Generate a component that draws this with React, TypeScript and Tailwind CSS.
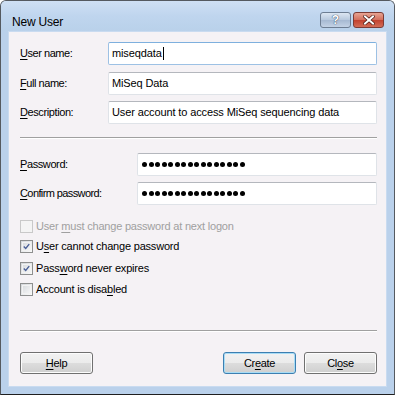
import React from "react"

const font = { fontFamily: '"Liberation Sans", Arial, sans-serif' }

function Key({ children }: { children: React.ReactNode }) {
  return <span className="underline underline-offset-[2px]">{children}</span>
}

function TextBox({ value, focused, width }: { value: string; focused?: boolean; width: string }) {
  return (
    <div
      className={`h-[23px] ${width} rounded-[2px] border bg-white flex items-center pl-[3px] ${
        focused ? "border-[#9dc1e4] border-t-[#7eb0de]" : "border-[#dfe3e8] border-t-[#b4b7bd]"
      }`}
    >
      <span className="text-[11px] tracking-[-0.12px] text-black">{value}</span>
      {focused && <span className="ml-[1px] w-px h-[13px] bg-black" />}
    </div>
  )
}

function Dots() {
  return (
    <div className="h-[23px] w-[240px] rounded-[2px] border border-[#dfe3e8] border-t-[#b4b7bd] bg-white flex items-center pl-[4px] gap-[1.5px]">
      {Array.from({ length: 16 }).map((_, i) => (
        <span key={i} className="w-[5px] h-[5px] rounded-full bg-black" />
      ))}
    </div>
  )
}

function Check({ checked, disabled, children }: { checked?: boolean; disabled?: boolean; children: React.ReactNode }) {
  return (
    <div className="flex items-center h-[13px]">
      <div
        className={`w-[13px] h-[13px] border flex items-center justify-center ${
          disabled ? "border-[#c9c9c9] bg-[#f4f4f4]" : "border-[#8e8f8f] bg-gradient-to-br from-[#d3d6da] to-[#fbfbfb]"
        }`}
      >
        <div className={`w-[9px] h-[9px] border ${disabled ? "border-[#f4f4f4]" : "border-[#f2f2f2]"} flex items-center justify-center`}>
          {checked && (
            <svg width="9" height="9" viewBox="0 0 9 9">
              <path d="M1 4.5 L3.5 7 L8 1.5" fill="none" stroke="#4a5f97" strokeWidth="1.8" />
            </svg>
          )}
        </div>
      </div>
      <span className={`ml-[3px] text-[11px] tracking-[-0.2px] ${disabled ? "text-[#a0a0a0]" : "text-black"}`}>{children}</span>
    </div>
  )
}

function Button({ children, primary }: { children: React.ReactNode; primary?: boolean }) {
  return (
    <div
      className={`w-[73px] h-[22px] rounded-[3px] border ${
        primary ? "border-[#3c7fb1] shadow-[inset_0_0_0_1px_#a8dcf5]" : "border-[#707070] shadow-[inset_0_0_0_1px_#fcfcfc]"
      } bg-[linear-gradient(#f2f2f2_0%,#ebebeb_50%,#dddddd_50%,#cfcfcf_100%)] flex items-center justify-center text-[11px] tracking-[-0.3px] text-black`}
    >
      {children}
    </div>
  )
}

function Separator() {
  return <div className="h-[2px] border-t border-[#a0a0a0] border-b border-b-white" />
}

export default function App() {
  return (
    <div style={font} className="w-[395px] h-[395px] bg-white">
      <div className="w-[395px] h-[395px] rounded-t-[6px] border border-[#555a60] border-b-[#1f1f1f] bg-[#bad1eb] flex flex-col overflow-hidden">
        {/* Title bar */}
        <div className="h-[30px] shrink-0 flex items-start justify-between bg-gradient-to-b from-[#cfe0f4] via-[#bfd5ee] to-[#b9d1ea] pl-[11px] pr-[10px]">
          <span className="mt-[12px] text-[12px] tracking-[-0.2px] text-black">New User</span>
          <div className="mt-[11px] flex gap-[2px]">
            <div className="w-[31px] h-[16px] rounded-[3px] border border-[#6d7d92] bg-[linear-gradient(#dce6f2_0%,#b7c8dd_50%,#a5b8d1_50%,#c3d2e5_100%)] flex items-center justify-center">
              <span className="text-[12px] font-bold text-white leading-none [text-shadow:0_0_1px_#30405a,0_0_1px_#30405a]">?</span>
            </div>
            <div className="w-[31px] h-[16px] rounded-[3px] border border-[#7c3b35] bg-[linear-gradient(#e8a493_0%,#d26e5c_50%,#c1402d_50%,#d36c56_100%)] flex items-center justify-center">
              <svg width="12" height="10" viewBox="0 0 12 10">
                <path d="M2 1.5 L10 8.5 M10 1.5 L2 8.5" stroke="#4a1a14" strokeWidth="3.4" strokeLinecap="square" />
                <path d="M2 1.5 L10 8.5 M10 1.5 L2 8.5" stroke="#ffffff" strokeWidth="2" strokeLinecap="square" />
              </svg>
            </div>
          </div>
        </div>

        {/* Body with frame */}
        <div className="flex-1 flex px-[7px] pb-[7px] pr-[7px]">
          <div className="flex-1 bg-[#f5f2f5] border border-[#c9dbf0] pl-[11px] pr-[9px] flex flex-col">
            <div className="mt-[10px] flex items-center justify-between">
              <span className="text-[11px] tracking-[-0.45px]"><Key>U</Key>ser name:</span>
              <TextBox value="miseqdata" focused width="w-[269px]" />
            </div>
            <div className="mt-[7px] flex items-center justify-between">
              <span className="text-[11px] tracking-[-0.45px]"><Key>F</Key>ull name:</span>
              <TextBox value="MiSeq Data" width="w-[269px]" />
            </div>
            <div className="mt-[6px] flex items-center justify-between">
              <span className="text-[11px] tracking-[-0.4px]"><Key>D</Key>escription:</span>
              <TextBox value="User account to access MiSeq sequencing data" width="w-[269px]" />
            </div>

            <div className="mt-[13px]">
              <Separator />
            </div>

            <div className="mt-[14px] flex items-center justify-between">
              <span className="text-[11px] tracking-[-0.4px]"><Key>P</Key>assword:</span>
              <Dots />
            </div>
            <div className="mt-[6px] flex items-center justify-between">
              <span className="text-[11px] tracking-[-0.6px]"><Key>C</Key>onfirm password:</span>
              <Dots />
            </div>

            <div className="mt-[15px] flex flex-col">
              <Check disabled>User <Key>m</Key>ust change password at next logon</Check>
              <div className="mt-[7px]">
                <Check checked>U<Key>s</Key>er cannot change password</Check>
              </div>
              <div className="mt-[9px]">
                <Check checked>Pass<Key>w</Key>ord never expires</Check>
              </div>
              <div className="mt-[8px]">
                <Check>Account is disa<Key>b</Key>led</Check>
              </div>
            </div>

            <div className="mt-[34px]">
              <Separator />
            </div>

            <div className="mt-[20px] flex items-center justify-between">
              <Button><Key>H</Key>elp</Button>
              <div className="flex gap-[8px]">
                <Button primary>Cr<Key>e</Key>ate</Button>
                <Button>Cl<Key>o</Key>se</Button>
              </div>
            </div>
          </div>
        </div>
      </div>
    </div>
  )
}
